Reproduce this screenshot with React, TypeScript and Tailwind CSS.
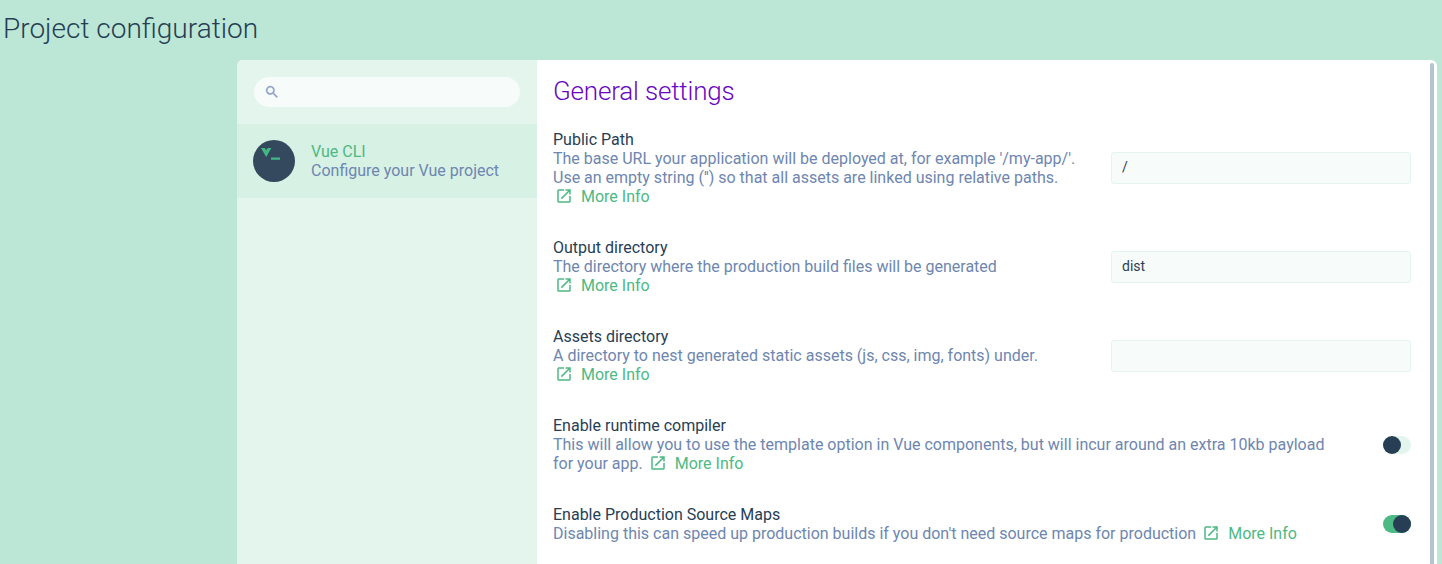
import type { ReactNode } from 'react';

function MoreInfo({ className = '' }: { className?: string }) {
  return (
    <a className={`inline-flex h-[19px] items-start align-top text-[#4db984] ${className}`}>
      <svg className="mr-2 ml-0.5 size-[18px] shrink-0" viewBox="0 0 24 24" fill="currentColor">
        <path d="M19 19H5V5h7V3H5a2 2 0 0 0-2 2v14a2 2 0 0 0 2 2h14c1.1 0 2-.9 2-2v-7h-2v7zM14 3v2h3.59l-9.83 9.83 1.41 1.41L19 6.41V10h2V3h-7z" />
      </svg>
      More Info
    </a>
  );
}

function Setting({ title, control, children }: { title: string; control: ReactNode; children: ReactNode }) {
  return (
    <div className="flex items-center justify-between">
      <div className="min-w-0 flex-1">
        <div className="text-[#273e54]">{title}</div>
        <div className="text-[#6e86b0]">{children}</div>
      </div>
      {control}
    </div>
  );
}

function Field({ value }: { value: string }) {
  return (
    <input
      className="ml-4 h-8 w-[300px] shrink-0 rounded-[3px] border border-[#e4f5ee] bg-[#f7fbfa] px-2.5 pb-[1.2px] text-sm text-[#2c3e50] outline-none"
      defaultValue={value}
    />
  );
}

function Toggle({ on = false }: { on?: boolean }) {
  return (
    <div className={`ml-12 flex h-[18px] w-7 shrink-0 rounded-full ${on ? 'justify-end bg-[#4db984]' : 'bg-[#e4f5ee]'}`}>
      <div className="size-[18px] rounded-full bg-[#273e54]" />
    </div>
  );
}

export default function App() {
  return (
    <div className="flex h-[564px] w-[1442px] flex-col overflow-hidden bg-[#bce7d6] font-['Roboto',sans-serif] text-base leading-[19px]">
      <h1 className="h-[60px] shrink-0 pt-[13px] pl-[3px] text-[28px] leading-8 font-light text-[#273e54]">Project configuration</h1>
      <div className="mr-[5px] ml-[237px] flex min-h-0 flex-1 overflow-hidden rounded-t-md bg-white">
        <aside className="w-[300px] shrink-0 bg-[#e4f5ee]">
          <div className="px-[17px] py-[17px]">
            <div className="flex h-[30px] items-center rounded-full bg-[#f7fbfa] pl-2.5">
              <svg className="size-4 text-[#8da2c4]" viewBox="0 0 24 24" fill="currentColor" stroke="currentColor" strokeWidth="0.5">
                <path d="M15.5 14h-.79l-.28-.27A6.47 6.47 0 0 0 16 9.5 6.5 6.5 0 1 0 9.5 16c1.61 0 3.09-.59 4.23-1.57l.27.28v.79l5 4.99L20.49 19l-4.99-5zm-6 0C7.01 14 5 11.99 5 9.5S7.01 5 9.5 5 14 7.01 14 9.5 11.99 14 9.5 14z" />
              </svg>
            </div>
          </div>
          <div className="flex h-[74px] items-center bg-[#d7f1e5] pl-4">
            <svg className="size-[42px]" viewBox="0 0 42 42">
              <circle cx="21" cy="21" r="21" fill="#35495e" />
              <path d="M8 8h3.8l1.4 2.2L14.6 8h3.8l-5.2 9z" fill="#41b883" />
              <path d="M18 17.4h9v2.4h-9z" fill="#41b883" />
            </svg>
            <div className="ml-4">
              <div className="text-[#4db984]">Vue CLI</div>
              <div className="text-[#6e86b0]">Configure your Vue project</div>
            </div>
          </div>
        </aside>
        <main className="min-w-0 flex-1 pr-[19px] pl-4">
          <h2 className="h-[70px] pt-[15px] text-[26px] leading-8 font-light tracking-[-0.18px] text-[#6806c1]">General settings</h2>
          <div className="flex flex-col gap-8">
            <Setting title="Public Path" control={<Field value="/" />}>
              The base URL your application will be deployed at, for example '/my-app/'.
              <br />
              Use an empty string ('') so that all assets are linked using relative paths.
              <br />
              <MoreInfo />
            </Setting>
            <Setting title="Output directory" control={<Field value="dist" />}>
              The directory where the production build files will be generated
              <br />
              <MoreInfo />
            </Setting>
            <Setting title="Assets directory" control={<Field value="" />}>
              A directory to nest generated static assets (js, css, img, fonts) under.
              <br />
              <MoreInfo />
            </Setting>
            <Setting title="Enable runtime compiler" control={<Toggle />}>
              This will allow you to use the template option in Vue components, but will incur around an extra 10kb payload
              <br />
              for your app. <MoreInfo />
            </Setting>
            <Setting title="Enable Production Source Maps" control={<Toggle on />}>
              Disabling this can speed up production builds if you don't need source maps for production <MoreInfo />
            </Setting>
          </div>
        </main>
        <div className="mt-[3px] mr-[3px] w-1 shrink-0 rounded-t-full bg-[#b3c3cf]" />
      </div>
    </div>
  );
}
